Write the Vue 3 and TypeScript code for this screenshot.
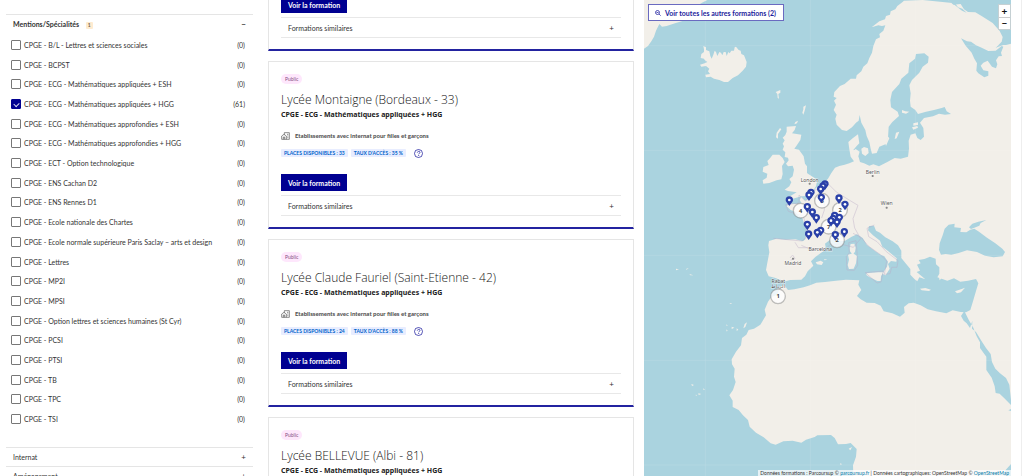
<script setup lang="ts">
import { ref } from 'vue'

interface Speciality { label: string; count: number; checked: boolean }
interface School { name: string; places: number; rate: number }
interface Point { x: number; y: number }
interface Cluster extends Point { count: string }
interface City extends Point { name: string; dot?: number }

const specialities = ref<Speciality[]>([
  'B/L - Lettres et sciences sociales',
  'BCPST',
  'ECG - Mathématiques appliquées + ESH',
  'ECG - Mathématiques appliquées + HGG',
  'ECG - Mathématiques approfondies + ESH',
  'ECG - Mathématiques approfondies + HGG',
  'ECT - Option technologique',
  'ENS Cachan D2',
  'ENS Rennes D1',
  'Ecole nationale des Chartes',
  'Ecole normale supérieure Paris Saclay – arts et design',
  'Lettres',
  'MP2I',
  'MPSI',
  'Option lettres et sciences humaines (St Cyr)',
  'PCSI',
  'PTSI',
  'TB',
  'TPC',
  'TSI',
].map((name, i) => ({ label: `CPGE - ${name}`, count: i === 3 ? 61 : 0, checked: i === 3 })))

const schools: School[] = [
  { name: 'Lycée Montaigne (Bordeaux - 33)', places: 33, rate: 35 },
  { name: 'Lycée Claude Fauriel (Saint-Etienne - 42)', places: 24, rate: 88 },
  { name: 'Lycée BELLEVUE (Albi - 81)', places: 30, rate: 80 },
]

const cities: City[] = [
  { name: 'London', x: 509, y: 545, dot: 551 },
  { name: 'Berlin', x: 698, y: 521, dot: 528 },
  { name: 'Wien', x: 740, y: 616, dot: 623 },
  { name: 'Barcelona', x: 541, y: 753 },
  { name: 'Madrid', x: 459, y: 794, dot: 776 },
  { name: 'Rabat', x: 415, y: 848 },
  { name: 'الرباط', x: 414, y: 865 },
]

const clusters: Cluster[] = [
  { x: 482, y: 632, count: '4' },
  { x: 546, y: 602, count: '3' },
  { x: 600, y: 630, count: '2' },
  { x: 566, y: 680, count: '7' },
  { x: 591, y: 721, count: '2' },
  { x: 414, y: 889, count: '1' },
]

const pins: Point[] = [
  [448, 600], [513, 577], [507, 585], [555, 552], [549, 558], [542, 567], [544, 592],
  [597, 594], [615, 613], [502, 620], [517, 636], [529, 653], [502, 673], [506, 702],
  [542, 691], [532, 697], [584, 646], [580, 655], [598, 652], [573, 662], [591, 666],
  [586, 704], [613, 695],
].map(([x, y]) => ({ x, y }))

const meridians = [196, 511, 826]
const parallels = [137, 451, 766, 1081, 1395]
</script>

<template>
  <main class="page">
    <aside class="filters">
      <button class="accordion accordion--open" type="button">
        <span>Mentions/Spécialités <span class="total">1</span></span>
        <span class="sign">−</span>
      </button>
      <ul class="options">
        <li v-for="item in specialities" :key="item.label">
          <label class="option">
            <input v-model="item.checked" type="checkbox" />
            <span class="option-label">{{ item.label }}</span>
            <span>({{ item.count }})</span>
          </label>
        </li>
      </ul>
      <button class="accordion" type="button"><span>Internat</span><span class="sign">+</span></button>
      <button class="accordion" type="button"><span>Aménagement</span><span class="sign">+</span></button>
    </aside>

    <section class="results">
      <article class="card card--end">
        <button class="primary" type="button">Voir la formation</button>
        <button class="similar" type="button"><span>Formations similaires</span><span class="sign">+</span></button>
      </article>
      <article v-for="school in schools" :key="school.name" class="card">
        <span class="status">Public</span>
        <h2>{{ school.name }}</h2>
        <h3>CPGE - ECG - Mathématiques appliquées + HGG</h3>
        <p class="boarding">
          <svg class="building" viewBox="0 0 27 24" aria-hidden="true">
            <path d="M10 8V2h15v20H2V12l7-5 7 5v10M7 22v-7h4v7M18 7h4M19 12h3M19 17h3" />
          </svg>
          Etablissements avec internat pour filles et garçons
        </p>
        <div class="stats">
          <span class="stat">PLACES DISPONIBLES : {{ school.places }}</span>
          <span class="stat">TAUX D'ACCÈS : {{ school.rate }} %</span>
          <button class="help" type="button" aria-label="Aide">
            <svg viewBox="0 0 27 27" aria-hidden="true">
              <circle cx="13.5" cy="13.5" r="12" />
              <path d="M10 11c0-5 8-5 8-1 0 3-4 3-4 6M14 18v3" />
            </svg>
          </button>
        </div>
        <button class="primary" type="button">Voir la formation</button>
        <button class="similar" type="button"><span>Formations similaires</span><span class="sign">+</span></button>
      </article>
    </section>

    <section class="map">
      <svg class="chart" viewBox="12 0 1101 1428" preserveAspectRatio="xMidYMin slice" role="img" aria-label="Carte des formations">
        <g class="land">
          <path d="M12 0H202L186 8 170 18 150 32 130 62 105 70 80 78 66 80 58 72 48 92 42 110 34 124 24 138 12 146Z" />
          <path d="M190 138l8 4 0 8 10 4 3 14 4 8 5-12 4-12 4 4 4 12 6-12 5 2 4 8 4-10 6 0 3 12 5-12 4 4 5-8 8 0 2-10 4-2 8 10 6 2 2 10 8 4 8 20-2 14-10 12-14 14-16 8-14 12-12 0-14-6-16-4-10-6-14 2-2-8 14-2-6-8 4-8-10-8-14 2-4-6 14-4 8-4-8-6-2-4-10-2 2-12 8-6 0-8Z" />
          <path d="M407 276l14-6 0 8-6 4 2 14-4-2-1-12ZM490 320l8-4-4 16-4 12-3-6 3-10ZM466 366l8-4-3 8-8 3Z" />
          <path d="M440 380l28-2-4 12-8 10 28 4-3 16-12 18-6 8 14 3 14 20 4 22 6 8 0 20 5 4 26 16-4 20-8 12 14 6-16 10-34 2-20 6-28 6 10-10 14-8 10-6-26-4-10-4 14-10 6-12-6-10 10-8 4-20-4-12-14 2-6-8 8-10-2-8-10-2 2-14-8-8 4-10-4-8 6-10-6-8 8-8 4-10ZM420 384l4 4-10 14 0 14-6-4 2-14Z" />
          <path d="M398 464l20 0 10 10 6 12-8 12 2 24-4 16-14 3-22 8-18 2-2-10 12-8 2-12-14-6 2-14 16-6-4-12 8-8Z" />
          <path d="M848 0L792 2 783 10 772 18 766 28 752 34 750 44 738 48 735 58 718 64 695 82 715 76 726 78 736 76 730 92 718 102 720 112 708 118 700 138 696 158 688 174 682 190 670 200 664 214 650 226 648 236 632 236 614 252 600 258 583 276 581 290 590 294 582 302 588 314 581 330 590 344 586 356 590 374 606 390 620 393 636 382 648 368 656 362 659 345 664 368 676 390 680 408 688 426 692 446 696 461 710 459 718 440 738 432 744 414 746 380 757 366 777 348 773 335 753 322 751 300 756 276 778 252 784 236 805 218 808 190 825 176 828 162 853 160 866 170 864 188 848 200 838 218 816 240 808 256 812 280 810 302 812 320 826 330 834 342 858 335 882 330 905 324 914 321 920 334 933 342 915 344 897 341 879 349 852 354 840 368 850 384 852 410 842 420 832 414 826 400 812 404 806 422 807 446 804 470 782 476 764 474 742 486 717 499 700 493 688 497 672 490 660 486 656 472 650 457 640 450 650 438 658 430 654 403 638 415 625 426 628 448 632 470 642 484 628 490 614 494 598 498 585 503 574 519 564 536 551 549 538 556 527 565 514 585 505 598 495 602 484 590 479 600 485 610 468 612 447 611 440 619 452 630 465 635 475 646 487 653 492 670 500 690 496 718 489 724 466 718 438 719 410 716 387 723 385 736 388 757 382 788 378 810 386 829 404 833 421 839 432 845 450 840 484 839 495 829 503 814 520 797 513 784 526 771 552 752 557 740 555 731 572 718 596 722 614 723 635 710 651 703 668 714 681 735 704 752 719 763 733 769 744 785 741 800 732 814 728 822 737 826 749 806 744 792 753 783 769 785 770 775 744 753 727 740 720 722 699 706 684 691 687 678 702 677 708 692 720 698 736 712 758 724 774 736 784 752 784 774 798 791 811 807 811 824 824 838 832 844 838 832 856 838 830 816 840 812 831 794 842 790 836 780 853 777 870 770 887 776 888 793 898 802 898 821 892 832 922 842 942 835 961 845 984 842 1008 837 1015 850 1008 873 999 904 991 930 978 937 962 936 938 931 919 940 888 934 863 928 842 916 821 908 806 910 792 921 794 938 780 950 757 940 731 934 722 917 704 909 680 908 662 898 651 888 664 870 655 854 658 841 618 839 588 842 555 846 529 848 510 856 491 862 463 868 444 870 432 854 420 862 412 884 394 891 384 905 374 929 378 946 361 974 342 986 326 990 319 1004 306 1014 303 1036 288 1055 275 1078 276 1093 284 1106 282 1130 287 1146 279 1170 268 1186 278 1202 278 1221 296 1230 309 1246 324 1260 329 1280 348 1298 371 1312 392 1330 407 1334 430 1324 458 1322 484 1328 498 1319 524 1311 532 1306 573 1305 584 1314 594 1333 618 1332 632 1329 650 1347 648 1370 639 1396 640 1428H1113V0Z" />
          <path d="M632 732l11-1 4 12-2 12-7 9-8-10-1-10ZM624 764l15-4 12 8-3 22-7 16-14 1-4-12 4-16ZM680 820l14-2 20-1 16 0-7 12-1 14-10 0-24-12-9-6Z" />
          <path d="M637 454l10-7 12 8-4 14-12 2ZM664 446l8-5 12 4 2 14-10 9-10-7ZM768 398l10-3-8 20-6 2ZM745 410l3 5-10 23-2-8ZM786 330l10 4 12 1-10 6-12-3ZM820 370l14-3 0 8-14 2ZM816 382l16-4 2 5-14 6Z" />
          <path d="M840 866l16-2 17 5-6 4-22-2ZM945 874l20-7 10-4-12 14-12 3ZM896 828l10 5-7 8ZM507 792l8-1-3 6ZM527 787l15-5 8 5-5 8-14-2ZM552 777l10 2-8 2Z" />
          <path d="M310 985l4-13 7-5-5 14ZM290 985l5 4-5 4ZM275 980l8 3-8 4ZM260 988l3 5-4 1ZM260 973l3 4-4 0ZM108 806l9 2-9 3ZM138 807l8-3-6 5ZM148 822l12 4-9 0ZM268 909l9 1-5 2ZM154 1152l8 3-6 3ZM175 1180l9 2-8 3ZM167 1184l4 1-3 3ZM190 1165l5 4-5 0ZM626 1346l10-5-5 10ZM600 1390l6 2-4 3ZM405 1180l3 2-4 1Z" />
        </g>
        <g class="sea">
          <path d="M897 750l2-20 9-24 6-20 12-12 18-3-1 11 20 2-2 12 18 1 12-8 12-3 14 9 24 18 25 17 21 16 8 10-7 13-27 3-26-5-24-11-30-5-25 8-22 5-17-2-14 2ZM987 682l10-11 18-6 24-5-17 9-4 8-15 6-10 4Z" />
          <path d="M963 115l18 9 12 1 15 11 17 7 20 10 22-1 18-14 5 2-7 18 3 10-10 1-8 12 4 12-4 12-12-5-13-18-13 6-8 9 8 14 15 3 0 13-12 5-18-12-6-8 2-22-8-14-8-18-9-10-9-11Z" />
          <path d="M1090 135l8 0 15-4V0H925l15 14 22-2 10 16 12 8 22 1 20 12 32 20 21 24 9 18-3 14-18 19 6-3Z" />
          <path d="M963 948l8 14 9 8 10 14 7-22-1 24 12 10 16 26 14 22 14 18 4 24 10 20 14 14 18 14 10 20 5 46V1215l-20-20-14-14-12-2-3-20-9-26-16-23 0-40-19-26 0-17-10-18-10-26-14-24-13-26Z" />
          <path d="M848 0H925L966 32 980 38 967 26 954 22 945 10ZM1113 1392l-16 18-6 18h22ZM1113 1227l-8 4 8 2Z" />
        </g>
        <g class="border">
          <path d="M400 715l86 8 12-10 0-35-8-30-45-14-8-20 40-5 0-24 20 18 24-30 40-25 28 28 40 25 25 15-15 40 5 28 18 32-22 26-38-10-30 0-14 14-46 2-28-12" />
          <path d="M639 700l24 12 22 26 35 25 20 20-7 40 17-2 5-19 16 0 3-20-35-27-28-30-25-15-5-25 22-10M626 728l22-6 3 34 2 40-10 15-22-1-2-40 9-12ZM676 818l54-5-7 33-12 3Z" />
          <path d="M553 600v30l-8 24M465 727l10 16 38 0M450 774l8-9 7 11-13 4" />
        </g>
        <g class="grid">
          <line v-for="x in meridians" :key="`m${x}`" :x1="x" :x2="x" y1="0" y2="1428" />
          <line v-for="y in parallels" :key="`p${y}`" x1="12" x2="1113" :y1="y" :y2="y" />
        </g>
        <g v-for="city in cities" :key="city.name" class="city">
          <text :x="city.x" :y="city.y">{{ city.name }}</text>
          <rect v-if="city.dot" :x="city.x - 3" :y="city.dot - 3" width="6" height="6" rx="2" />
        </g>
        <g v-for="cluster in clusters" :key="`${cluster.x}-${cluster.y}`" class="cluster">
          <circle :cx="cluster.x" :cy="cluster.y" r="22" />
          <text :x="cluster.x" :y="cluster.y + 6">{{ cluster.count }}</text>
        </g>
        <g v-for="pin in pins" :key="`${pin.x}-${pin.y}`" class="pin" :transform="`translate(${pin.x} ${pin.y})`">
          <path d="M0 18L-7 8C-10 5-11 3-11 0A11 11 0 0 1 11 0C11 3 10 5 7 8Z" />
          <circle r="4" />
        </g>
      </svg>
      <button class="all" type="button">
        <svg viewBox="0 0 18 18" aria-hidden="true"><circle cx="7.5" cy="7.5" r="6" /><path d="M12 12l5 5M4.5 7.5h6" /></svg>
        Voir toutes les autres formations (2)
      </button>
      <div class="zoom">
        <button type="button" aria-label="Zoom avant">+</button>
        <button type="button" aria-label="Zoom arrière">−</button>
      </div>
      <p class="credits">
        Données formations : Parcoursup © <a href="#">parcoursup.fr</a> | Données cartographiques: OpenStreetMap © <a href="#">OpenStreetMap</a>
      </p>
    </section>
  </main>
</template>

<style>
body { margin: 0; background: #fff; }
</style>

<style scoped>
* { box-sizing: border-box; }
.page {
  display: grid;
  grid-template-columns: 257fr 366fr 367fr;
  grid-template-rows: minmax(0, 1fr);
  column-gap: 10px;
  height: 100vh;
  padding: 0 10px 0 1px;
  border-right: 1px solid #eee;
  overflow: hidden;
  font-family: Lato, "Noto Sans", sans-serif;
  font-size: 7px;
  line-height: 10px;
  color: #333;
}
button { font: inherit; color: inherit; margin: 0; padding: 0; border: 0; background: none; }
h2, h3, p, ul { margin: 0; padding: 0; }
ul { list-style: none; }

.filters { padding: 14px 5px 0; }
.accordion {
  display: flex;
  align-items: center;
  justify-content: space-between;
  width: 100%;
  height: 19px;
  padding: 0 7px;
  border-top: 1px solid #e5e5e5;
}
.accordion--open { font-weight: 700; }
.total {
  display: inline-block;
  margin-left: 5px;
  padding: 0 2px;
  border-radius: 1px;
  background: #feebd0;
  color: #716043;
  font-size: 5px;
  line-height: 7px;
}
.sign { font-size: 8px; }
.options {
  display: grid;
  grid-auto-rows: 1fr;
  min-height: 394px;
  margin: 2px 8px 18px 5px;
}
.option { display: flex; align-items: center; height: 100%; }
.option-label { flex: 1; }
.option input {
  appearance: none;
  width: 10px;
  height: 10px;
  margin: 0 3px 0 0;
  border: 1px solid #777;
  border-radius: 1px;
  background: #fff;
}
.option input:checked {
  display: grid;
  place-items: center;
  border-color: #000091;
  background: #000091;
}
.option input:checked::before {
  content: "";
  width: 4px;
  height: 3px;
  border: solid #d5d5f0;
  border-width: 0 0 1px 1px;
  transform: rotate(-45deg);
}

.results { display: flex; flex-direction: column; gap: 10px; margin-top: -4px; }
.card {
  flex: none;
  display: flex;
  flex-direction: column;
  align-items: flex-start;
  height: 168px;
  padding: 12px 12px 0;
  border: 1px solid #e5e5e5;
  border-bottom: 2px solid #2323a0;
}
.card--end { height: 55px; padding-top: 0; border-top: 0; }
.status {
  padding: 0 4px;
  border-radius: 5px;
  background: #fee7fc;
  color: #855080;
  font-size: 5px;
  line-height: 10px;
}
h2 { margin-top: 8px; font-family: "Open Sans", sans-serif; font-size: 12px; line-height: 16px; font-weight: 300; color: #161616; }
h3 { margin-top: 2px; font-family: "Noto Sans", sans-serif; font-size: 7px; line-height: 10px; font-weight: 700; color: #222; }
.boarding {
  display: flex;
  align-items: center;
  gap: 5px;
  margin-top: 11px;
  font-size: 6px;
  font-weight: 900;
  color: #555;
}
svg { fill: none; }
.building { width: 9px; height: 8px; stroke: #555; stroke-width: 2; }
.stats { display: flex; align-items: center; gap: 3px; margin-top: 7px; height: 10px; }
.stat {
  padding: 0 3px;
  border-radius: 1px;
  background: #e8edff;
  color: #0063cb;
  font-size: 5px;
  line-height: 8px;
  font-weight: 700;
}
.help { width: 9px; height: 9px; margin-left: 5px; }
.help svg { display: block; width: 9px; height: 9px; stroke: #000091; stroke-width: 2; }
.primary {
  height: 17px;
  padding: 0 7px;
  background: #000091;
  color: #fff;
  font-weight: 700;
}
.stats + .primary { margin-top: 16px; }
.similar {
  display: flex;
  align-items: center;
  justify-content: space-between;
  width: 100%;
  height: 21px;
  margin-top: 4px;
  padding: 0 7px;
  border: solid #e8e8e8;
  border-width: 1px 0;
}

.map { position: relative; overflow: hidden; background: #aad3df; }
.chart { display: block; width: 100%; height: 100%; }
.land { fill: #f2efe9; }
.sea { fill: #aad3df; }
.border { stroke: #b9a9c6; stroke-width: 2; opacity: .6; }
.grid { stroke: #fff; stroke-width: 2; opacity: .16; }
.city text { font: 15px "Noto Sans", sans-serif; text-anchor: middle; fill: #555; stroke: #fff; stroke-width: 3; stroke-opacity: .6; paint-order: stroke; }
.city rect { fill: #888; }
.cluster circle { fill: #fff; fill-opacity: .8; stroke: #777; stroke-opacity: .45; stroke-width: 4; }
.cluster text { font: bold 17px "Noto Sans", sans-serif; text-anchor: middle; fill: #444; }
.pin path { fill: #2a40a8; }
.pin circle { fill: #fff; }
.all {
  position: absolute;
  top: 4px;
  left: 4px;
  display: flex;
  align-items: center;
  gap: 4px;
  height: 17px;
  padding: 0 7px 0 6px;
  border: 1px solid #6a6ac0;
  background: #fff;
  color: #1c1c9c;
  font-weight: 700;
}
.all svg { width: 6px; height: 6px; stroke: #000091; stroke-width: 2; }
.zoom {
  position: absolute;
  top: 5px;
  right: 1px;
  width: 11px;
  background: #fff;
  outline: 1px solid #c5d0d3;
}
.zoom button { display: block; width: 11px; height: 12px; font-size: 10px; line-height: 11px; font-weight: 700; color: #111; }
.zoom button + button { border-top: 1px solid #ccc; }
.credits {
  position: absolute;
  right: 0;
  bottom: 0;
  padding: 0 2px;
  background: rgba(255, 255, 255, .7);
  font-size: 5px;
  line-height: 6px;
  white-space: nowrap;
}
.credits a { color: #0078a8; text-decoration: none; }
</style>
